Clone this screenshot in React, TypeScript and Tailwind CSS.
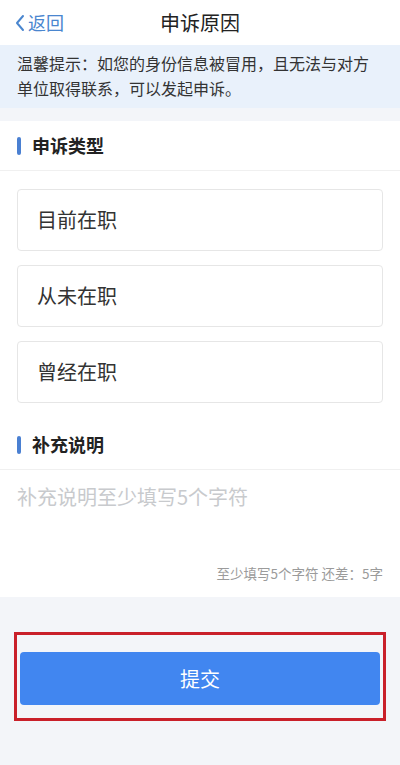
import React from "react";

const font = { fontFamily: '"Noto Sans CJK SC", "Noto Sans", sans-serif' };

const types: string[] = ["目前在职", "从未在职", "曾经在职"];

const SectionTitle = ({ text }: { text: string }) => (
  <div className="flex items-center h-[50px] px-[17px] border-b border-[#f0f0f0]">
    <span className="w-[4px] h-[18px] rounded-full bg-[#4a80d2] mr-[11px]" />
    <h3 className="text-[18px] font-bold text-[#222]">{text}</h3>
  </div>
);

const App = () => {
  return (
    <div className="w-[400px] h-[765px] bg-[#f3f5f9] flex flex-col overflow-hidden" style={font}>
      {/* header */}
      <div className="grid grid-cols-3 items-center h-[45px] bg-white px-[14px]">
        <button className="flex items-center text-[18px] text-[#4a86cf]">
          <svg width="12" height="20" viewBox="0 0 12 20" className="mr-[2px]">
            <polyline points="9,3 3,10 9,17" fill="none" stroke="#4a86cf" strokeWidth="2" strokeLinecap="round" strokeLinejoin="round" />
          </svg>
          返回
        </button>
        <h1 className="text-center text-[20px] text-[#222] whitespace-nowrap">申诉原因</h1>
        <div />
      </div>

      {/* tip */}
      <div className="bg-[#e9f1fb] px-[17px] pt-[6px] pb-[7px] text-[16px] leading-[25px] text-[#333]">
        温馨提示：如您的身份信息被冒用，且无法与对方单位取得联系，可以发起申诉。
      </div>

      <div className="h-[13px]" />

      {/* type */}
      <div className="bg-white">
        <SectionTitle text="申诉类型" />
        <div className="flex flex-col gap-[14px] px-[17px] pt-[18px] pb-[17px]">
          {types.map((t) => (
            <div
              key={t}
              className="h-[62px] flex items-center px-[19px] border border-[#e6e6e6] rounded-[4px] text-[20px] text-[#333]"
            >
              {t}
            </div>
          ))}
        </div>

        <SectionTitle text="补充说明" />
        <div className="h-[127px] px-[17px] pt-[13px] pb-[14px] flex flex-col justify-between">
          <textarea
            placeholder="补充说明至少填写5个字符"
            className="w-full flex-1 resize-none outline-none text-[20px] leading-[28px] text-[#333] placeholder:text-[#c8cacd] bg-transparent"
          />
          <p className="text-right text-[13.5px] text-[#9b9b9b]">至少填写5个字符 还差：5字</p>
        </div>
      </div>

      {/* submit */}
      <div className="mt-[35px] mx-[14px] border-[3px] border-[#c9202a] px-[3px] pt-[17px] pb-[13px]">
        <button className="w-full h-[53px] rounded-[4px] bg-[#4186f0] text-white text-[20px]">
          提交
        </button>
      </div>
    </div>
  );
};

export default App;
